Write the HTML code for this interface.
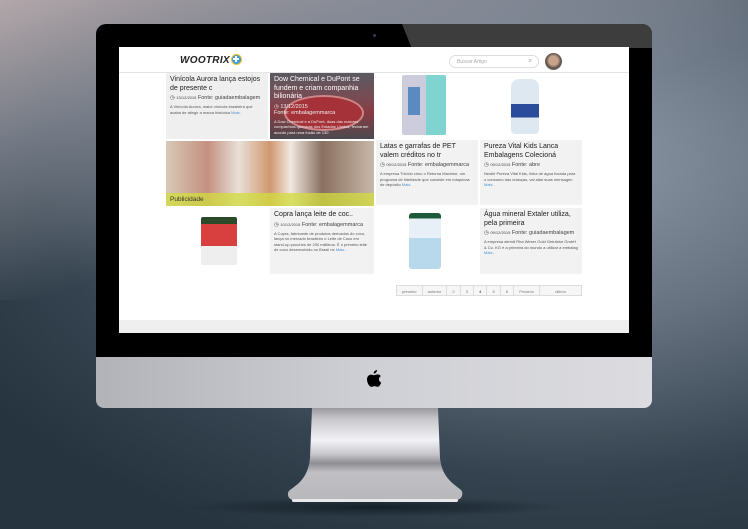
<!DOCTYPE html>
<html><head><meta charset="utf-8"><style>
*{margin:0;padding:0;box-sizing:border-box}
body{width:748px;height:529px;overflow:hidden;position:relative;font-family:"Liberation Sans",sans-serif;
background:radial-gradient(ellipse 700px 420px at 560px 160px,#8f9aa8 0%,#66717f 40%,#34434f 75%,#26343f 100%);}
.bgtl{position:absolute;left:0;top:0;width:748px;height:300px;background:linear-gradient(160deg,#b3a8ab 0%,rgba(160,160,170,.6) 25%,rgba(120,130,140,0) 55%)}
.bezel{position:absolute;left:96px;top:24px;width:556px;height:334px;background:#000;border-radius:10px 10px 0 0;overflow:hidden}
.refl{position:absolute;left:306px;top:0;width:300px;height:24px;background:#3d3d3d;transform:skewX(22deg);transform-origin:top left}
.cam{position:absolute;left:277px;top:10px;width:3px;height:3px;border-radius:50%;background:#3a3660}
.screen{position:absolute;left:119px;top:47px;width:510px;height:286px;background:#fff;overflow:hidden}
.chin{position:absolute;left:96px;top:357px;width:556px;height:51px;border-radius:0 0 8px 8px;background:linear-gradient(90deg,#b2b3b8,#cfd0d5 50%,#dcdce0)}
.hdr{position:absolute;left:0;top:0;width:510px;height:26px;border-bottom:1px solid #e4e4e4}
.logo{position:absolute;left:61px;top:8px;font-size:10px;font-weight:bold;font-style:italic;letter-spacing:.3px;color:#222}
.plus{position:absolute;left:112px;top:7px;width:11px;height:11px;border-radius:50%;background:#3aa0e0;border:1.5px solid #f4c020}
.plus:before,.plus:after{content:"";position:absolute;background:#fff}
.plus:before{left:3px;top:1px;width:2px;height:6px}.plus:after{left:1px;top:3px;width:6px;height:2px}
.search{position:absolute;left:330px;top:8px;width:90px;height:13px;border:1px solid #ddd;border-radius:7px;font-size:5px;color:#aaa;padding:3px 0 0 7px}
.av{position:absolute;left:426px;top:6px;width:17px;height:17px;border-radius:50%;background:radial-gradient(circle at 50% 45%,#c9a48c 0 35%,#5a5048 60%,#a9a9a9 100%)}
.card{position:absolute;background:#efefef;padding:3px 4px;overflow:hidden}
.card h3{font-size:7px;font-weight:normal;color:#222;line-height:8.5px}
.meta{font-size:5.5px;color:#444;margin-top:2px}
.card p{font-size:4px;color:#555;line-height:5.5px;margin-top:3px}
.card p b{color:#4a90d0;font-weight:normal}
.img{position:absolute}
.pg{position:absolute;left:277px;top:238px;width:186px;height:11px;display:flex;border:1px solid #ddd;background:#f6f6f6}
.pg span{font-size:4px;color:#777;padding-top:3px;border-right:1px solid #ddd;text-align:center;flex:1 1 auto}
.foot{position:absolute;left:0;top:273px;width:510px;height:13px;background:#efefef}
.stand{position:absolute;left:286px;top:408px;width:178px;height:110px}
</style></head><body>
<div class="bgtl"></div>
<div class="bezel"><div class="refl"></div><div class="cam"></div></div>
<div class="screen">
 <div class="hdr"><div class="logo">WOOTRIX</div><div class="plus"></div><div class="search">Buscar Artigo<span style="position:absolute;right:6px;top:2px;color:#888;font-size:6px">⌕</span></div><div class="av"></div></div>
 <div class="card" style="left:47px;top:26px;width:102px;height:66px"><h3>Vinícola Aurora lança estojos de presente c</h3><div class="meta">◷ <span style="font-size:4px">13/12/2015</span> Fonte: guiadaembalagem</div><p>A Vinícola Aurora, maior vinícola brasileira que acaba de atingir a marca histórica <b>Mais..</b></p></div>
 <div class="card" style="left:151px;top:26px;width:104px;height:66px;background:linear-gradient(180deg,#5a5a62,#7a4a52 40%,#8a3a40 60%,#4a4a50);color:#fff">
  <div style="position:absolute;left:14px;top:22px;width:80px;height:36px;border-radius:50%;border:2px solid #c88;background:#a53238"></div>
  <h3 style="color:#fff;position:relative">Dow Chemical e DuPont se fundem e criam companhia bilionária</h3><div class="meta" style="color:#eee;position:relative">◷ 13/12/2015<br>Fonte: embalagemmarca</div><p style="color:#eee;position:relative">A Dow Chemical e a DuPont, duas das maiores companhias químicas dos Estados Unidos, fecharam acordo para uma fusão de 130</p></div>
 <div class="img" style="left:283px;top:28px;width:44px;height:60px;background:linear-gradient(90deg,#ccd 0 55%,#7fd3d0 55%);border-radius:2px"><div style="position:absolute;left:6px;top:12px;width:12px;height:28px;background:#5a8ac0"></div></div>
 <div class="img" style="left:392px;top:32px;width:28px;height:55px;border-radius:8px 8px 4px 4px;background:linear-gradient(180deg,#dde8f0 0 45%,#2a4c9a 45% 70%,#dde8f0 70%)"></div>
 <div class="card" style="left:257px;top:93px;width:102px;height:65px;background:#f2f2f2"><h3>Latas e garrafas de PET valem créditos no tr</h3><div class="meta">◷ <span style="font-size:4px">09/12/2015</span> Fonte: embalagemmarca</div><p>A empresa Triciclo criou o Retorna Machine, um programa de fidelidade que consiste em máquinas de depósito <b>Mais..</b></p></div>
 <div class="card" style="left:361px;top:93px;width:102px;height:65px;background:#f2f2f2"><h3>Pureza Vital Kids Lanca Embalagens Colecioná</h3><div class="meta">◷ <span style="font-size:4px">09/12/2015</span> Fonte: abre</div><p>Nestlé Pureza Vital Kids, linha de água focada para o consumo das crianças, vai aliar suas mensagen <b>Mais..</b></p></div>
 <div class="img" style="left:47px;top:94px;width:208px;height:65px;background:linear-gradient(90deg,#d8c8b8,#c49080 20%,#e8e0d8 35%,#d09870 50%,#f0e8e0 60%,#8a7060 75%,#c8b8a8 100%)"><div style="position:absolute;left:0;bottom:0;width:208px;height:13px;background:rgba(210,220,60,.75);font-size:6.5px;color:#333;padding:3px 4px">Publicidade</div></div>
 <div class="img" style="left:82px;top:170px;width:36px;height:48px;background:linear-gradient(180deg,#2a4a2a 0 15%,#d84040 15% 60%,#eee 60%);border-radius:2px"></div>
 <div class="card" style="left:151px;top:161px;width:104px;height:66px;background:#f2f2f2"><h3>Copra lança leite de coc..</h3><div class="meta">◷ <span style="font-size:4px">10/12/2015</span> Fonte: embalagemmarca</div><p>A Copra, fabricante de produtos derivados do coco, lança no mercado brasileiro o Leite de Coco em stand-up pouches de 200 mililitros. É o primeiro leite de coco desenvolvido no Brasil ne <b>Mais..</b></p></div>
 <div class="img" style="left:290px;top:166px;width:32px;height:56px;background:linear-gradient(180deg,#1d5a3a 0 10%,#e6f0f6 10% 45%,#b8d8ec 45%);border-radius:3px"></div>
 <div class="card" style="left:361px;top:161px;width:102px;height:66px;background:#f2f2f2"><h3>Água mineral Extaler utiliza, pela primeira</h3><div class="meta">◷ <span style="font-size:4px">09/12/2015</span> Fonte: guiadaembalagem</div><p>A empresa alemã Rha Weser Gold Getränke GmbH &amp; Co. KG é a primeira do mundo a utilizar a embalag <b>Mais..</b></p></div>
 <div class="pg"><span>primeiro</span><span>anterior</span><span>2</span><span>3</span><span style="color:#222">4</span><span>5</span><span>6</span><span>Próximo</span><span style="border:0;flex-grow:3">último</span></div>
 <div class="foot"></div>
</div>
<div class="chin">
<svg style="position:absolute;left:268px;top:12px" width="20" height="24" viewBox="0 0 20 24"><path d="M13 1c0 2-1.5 3.6-3.3 3.6C9.6 2.8 11 1.2 13 1zM10 6.2c1.2 0 2.3-.8 3.6-.8 1 0 2.4.5 3.2 1.7-2.7 1.6-2.3 5.4.4 6.5-.6 1.6-1.8 4.1-3.4 4.2-1.3.1-1.700-.7-3.2-.7s-2 .7-3.2.8C5.6 18 3 14 3 10.4 3 7.6 4.9 5.6 7 5.6c1.2 0 2.1.6 3 .6z" fill="#000"/></svg></div>
<div style="position:absolute;left:180px;top:497px;width:390px;height:20px;border-radius:50%;background:radial-gradient(ellipse,rgba(10,20,28,.7),rgba(10,20,28,0) 70%)"></div>
<svg class="stand" viewBox="0 0 178 110"><defs><linearGradient id="g" x1="0" y1="0" x2="0" y2="1"><stop offset="0" stop-color="#9a9a9e"/><stop offset=".12" stop-color="#c8c8cc"/><stop offset=".35" stop-color="#f2f2f6"/><stop offset=".5" stop-color="#c8c8cc"/><stop offset=".6" stop-color="#8e8e92"/><stop offset=".7" stop-color="#c0c0c4"/><stop offset="1" stop-color="#b8b8bc"/></linearGradient></defs>
<path d="M26 0H152L154 50C156 70 168 76 175 82C178 85 176 92 170 92H8C2 92 0 85 4 82C12 76 22 70 24 50Z" fill="url(#g)"/><rect x="6" y="91" width="166" height="3" rx="1.5" fill="#e8e8ec"/></svg>
</body></html>
